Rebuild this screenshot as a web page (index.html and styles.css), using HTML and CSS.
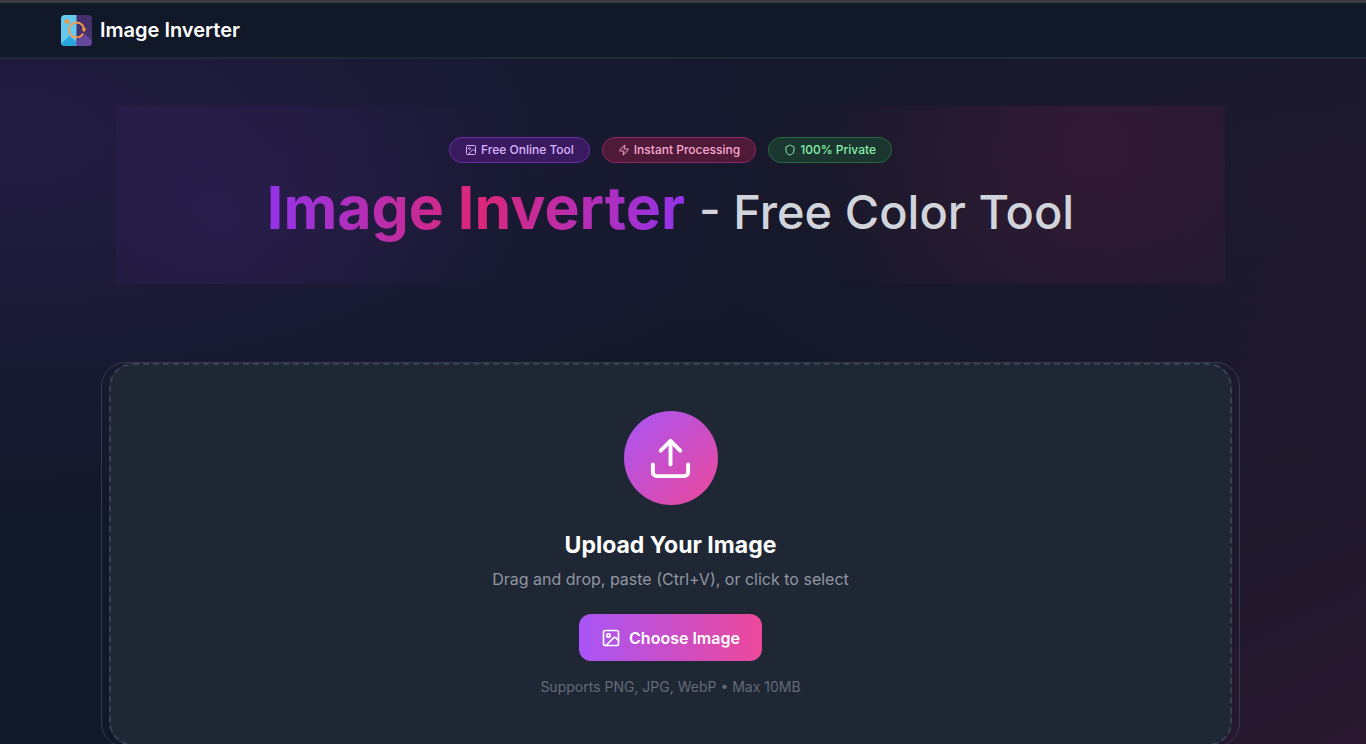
FILE: index.html
```html
<!DOCTYPE html>
<html lang="en">
<head>
    <meta charset="UTF-8">
    <meta name="viewport" content="width=device-width, initial-scale=1.0">
    <title>Image Inverter - Free Color Tool</title>
    <link rel="stylesheet" href="styles.css">
</head>
<body>

<header class="site-header">
    <a href="#" class="brand">
        <svg class="logo" viewBox="0 0 31 31" aria-hidden="true">
            <defs>
                <clipPath id="logoShape"><rect width="31" height="31" rx="4"/></clipPath>
            </defs>
            <g clip-path="url(#logoShape)">
                <rect width="16" height="31" fill="#66c9ee"/>
                <rect x="15.5" width="16" height="31" fill="#44306b"/>
                <path d="M0 29 8.500 21l7 6v4H0z" fill="#28a5da"/>
                <path d="M15.500 26 24 19l7 7v5H15.500z" fill="#65479c"/>
            </g>
            <circle cx="6" cy="6.500" r="2.300" fill="#fb923c"/>
            <circle cx="15.500" cy="15" r="7.500" fill="none" stroke="#fb9a50" stroke-width="1.800" stroke-dasharray="43 4" transform="rotate(28 15.500 15)"/>
            <path d="M20.500 13.500h5l-2.500 4z" fill="#fb923c"/>
        </svg>
        <span>Image Inverter</span>
    </a>
</header>

<main class="page">
    <section class="hero">
        <div class="badges">
            <span class="badge purple">
                <svg class="icon" viewBox="0 0 24 24"><rect x="3" y="3" width="18" height="18" rx="2"/><circle cx="9" cy="9" r="2"/><path d="m21 15-3.100-3.100a2 2 0 0 0-2.800 0L6 21"/></svg>
                Free Online Tool
            </span>
            <span class="badge pink">
                <svg class="icon" viewBox="0 0 24 24"><path d="M4 14a1 1 0 0 1-.8-1.600l9.900-10.200a.5.5 0 0 1 .9.500l-1.900 6A1 1 0 0 0 13 10h7a1 1 0 0 1 .8 1.600l-9.900 10.200a.5.5 0 0 1-.9-.5l1.900-6A1 1 0 0 0 11 14z"/></svg>
                Instant Processing
            </span>
            <span class="badge green">
                <svg class="icon" viewBox="0 0 24 24"><path d="M20 13c0 5-3.500 7.500-7.700 9a1 1 0 0 1-.7 0C7.500 20.500 4 18 4 13V6a1 1 0 0 1 1-1c2 0 4.500-1.200 6.200-2.700a1.200 1.200 0 0 1 1.500 0C14.500 3.800 17 5 19 5a1 1 0 0 1 1 1z"/></svg>
                100% Private
            </span>
        </div>
        <h1><span class="title-gradient">Image Inverter</span> <span class="title-sub">- Free Color Tool</span></h1>
    </section>

    <section class="card">
        <div class="dropzone">
            <div class="upload-circle">
                <svg class="icon" viewBox="0 0 24 24"><path d="M12 15V3"/><path d="m7 8 5-5 5 5"/><path d="M21 15v4a2 2 0 0 1-2 2H5a2 2 0 0 1-2-2v-4"/></svg>
            </div>
            <h2>Upload Your Image</h2>
            <p class="hint">Drag and drop, paste (Ctrl+V), or click to select</p>
            <button type="button" class="choose">
                <svg class="icon" viewBox="0 0 24 24"><rect x="3" y="3" width="18" height="18" rx="2"/><circle cx="9" cy="9" r="2"/><path d="m21 15-3.100-3.100a2 2 0 0 0-2.800 0L6 21"/></svg>
                Choose Image
            </button>
            <p class="formats">Supports PNG, JPG, WebP • Max 10MB</p>
        </div>
    </section>
</main>

</body>
</html>
```
FILE: styles.css
```css
* {
    box-sizing: border-box;
}
html {
    background-color: #111827;
}
body {
    font-family: Inter, sans-serif;
    color: white;
    margin: 0;
    height: 100vh;
    overflow: hidden;
    border-top: 3px solid #3a3a3c;
    background:
        radial-gradient(ellipse at 0% 18%, rgba(147, 51, 234, 0.14), transparent 45%),
        radial-gradient(ellipse at 100% 25%, rgba(219, 39, 119, 0.07), transparent 45%),
        linear-gradient(155deg, rgba(17, 24, 39, 0) 60%, rgba(190, 24, 93, 0.14) 100%),
        #111827;
}
h1, h2, p {
    margin: 0;
}
.icon {
    fill: none;
    stroke: currentColor;
    stroke-width: 2;
    stroke-linecap: round;
    stroke-linejoin: round;
}
.site-header {
    display: flex;
    align-items: center;
    height: 56px;
    padding: 0 61px;
    background-color: #111827;
    border-bottom: 2px solid #1f2937;
}
.brand {
    display: flex;
    align-items: center;
    gap: 8px;
    color: white;
    font-size: 20px;
    font-weight: 600;
    text-decoration: none;
}
.logo {
    width: 31px;
    height: 31px;
}
.page {
    padding: 47px 126px 0 101px;
}
.hero {
    margin: 0 15px;
    height: 178px;
    padding-top: 31px;
    text-align: center;
    background:
        radial-gradient(circle at 10% 70%, rgba(147, 51, 234, 0.1), transparent 300px),
        radial-gradient(circle at 88% 20%, rgba(219, 39, 119, 0.13), transparent 300px);
}
.badges {
    display: flex;
    justify-content: center;
    gap: 12px;
}
.badge {
    display: flex;
    align-items: center;
    gap: 4px;
    height: 26px;
    padding: 0 15px;
    font-size: 12px;
    line-height: 14px;
    font-weight: 500;
    border: 1px solid;
    border-radius: 13px;
}
.badge .icon {
    width: 12px;
    height: 12px;
}
.badge.purple {
    color: #d8b4fe;
    background-color: #3a1a5e;
    border-color: #6b2fa5;
}
.badge.pink {
    color: #f9a8d4;
    background-color: #4f1a38;
    border-color: #8f2560;
}
.badge.green {
    color: #86efac;
    background-color: #1a362e;
    border-color: #25693f;
}
h1 {
    margin-top: 10px;
    font-size: 59px;
    line-height: 70px;
    white-space: nowrap;
}
.title-gradient {
    background: linear-gradient(90deg, #9333ea, #db2777, #9333ea);
    -webkit-background-clip: text;
    background-clip: text;
    color: transparent;
}
.title-sub {
    color: #d1d5db;
    font-size: 47px;
    font-weight: 500;
}
.card {
    margin-top: 78px;
    padding: 0 7px;
    border: 1px solid #323b4b;
    border-radius: 24px;
}
.dropzone {
    display: flex;
    flex-direction: column;
    align-items: center;
    height: 383px;
    padding-top: 46px;
    background-color: #1f2735;
    border: 2px dashed #374151;
    border-radius: 24px;
}
.upload-circle {
    display: flex;
    align-items: center;
    justify-content: center;
    width: 94px;
    height: 94px;
    border-radius: 50%;
    background: linear-gradient(135deg, #a855f7, #ec4899);
}
.upload-circle .icon {
    width: 47px;
    height: 47px;
}
h2 {
    margin-top: 24px;
    font-size: 23px;
    line-height: 32px;
}
.hint {
    margin-top: 6px;
    font-size: 16px;
    line-height: 24px;
    color: #9096a1;
}
.choose {
    display: flex;
    align-items: center;
    gap: 8px;
    height: 47px;
    margin-top: 23px;
    padding: 0 22px;
    font-family: inherit;
    font-size: 16px;
    line-height: 20px;
    font-weight: 600;
    color: white;
    border: none;
    border-radius: 12px;
    background: linear-gradient(90deg, #a855f7, #ec4899);
    cursor: pointer;
}
.choose .icon {
    width: 20px;
    height: 20px;
}
.formats {
    margin-top: 16px;
    font-size: 14px;
    line-height: 20px;
    color: #636a78;
}
```
